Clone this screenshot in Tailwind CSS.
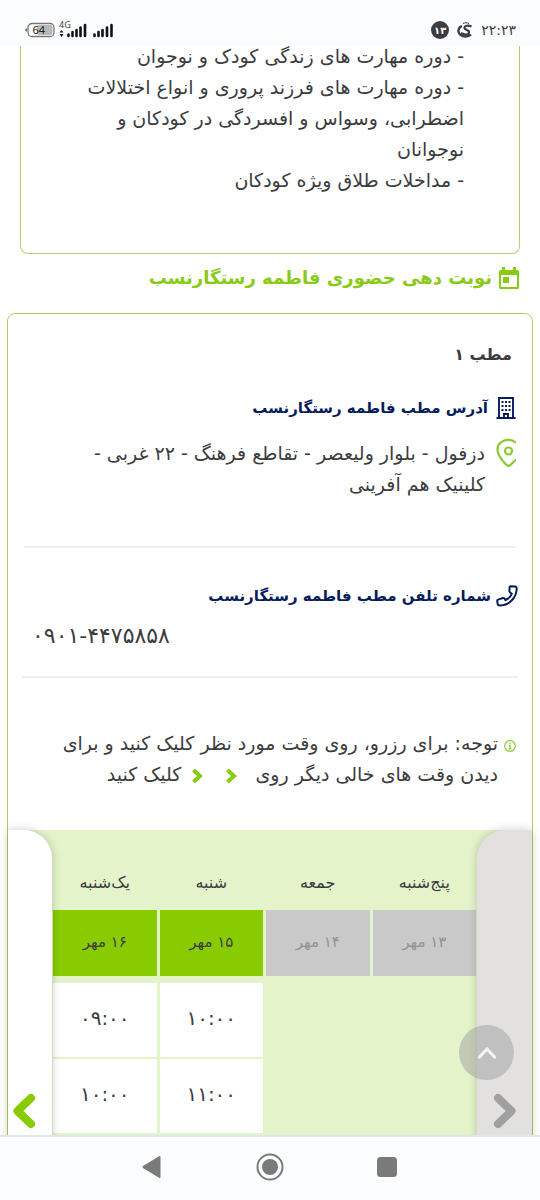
<!DOCTYPE html>
<html lang="fa" dir="rtl">
<head>
    <meta charset="UTF-8">
    <meta name="viewport" content="width=device-width, initial-scale=1.0">
    <title>نوبت دهی حضوری فاطمه رستگارنسب</title>
    <script src="https://cdn.jsdelivr.net/npm/@tailwindcss/browser@4"></script>
</head>
<body class="h-screen flex flex-col overflow-hidden bg-white text-[#3c3c3e] font-['DejaVu_Sans',sans-serif]">
    <!-- Status Bar -->
    <header class="relative z-20 h-[46px] shrink-0 bg-[#fbfcfe] flex items-end justify-between px-6 pb-1">
        <div class="flex items-center gap-2 h-6">
            <span class="text-sm">۲۲:۲۳</span>
            <svg class="w-4 h-4" viewBox="0 0 16 16" fill="none" stroke="#3c3c3e">
                <path d="M14.5 4.500C11.500 3 7 3.500 7.500 6S12.500 7.500 12 10.500 7 13 4 11" stroke-width="2.200"/>
                <path d="M5 4C1 5.500 0.500 10 3 12.500s8 3 11 0" stroke-width="2.400"/>
                <path d="M6 1.500c2-1 4-1 6 0" stroke-width="1"/>
            </svg>
            <span class="w-[18px] h-[18px] rounded-full bg-[#3c3c3e] text-white text-[10px] font-bold flex items-center justify-center">۱۳</span>
        </div>
        <div class="flex items-center gap-[2px] h-6" dir="ltr">
            <svg class="w-8 h-4" viewBox="0 0 32 16">
                <path d="M0.500 8L3 6v4z" fill="#777"/>
                <rect x="4" y="1.500" width="26" height="13" rx="4" fill="#fff" stroke="#777" stroke-width="1.300"/>
                <rect x="13" y="3" width="15.500" height="10" rx="2" fill="#b8b8b8"/>
                <text x="8.500" y="12" font-size="11" fill="#222" font-family="Noto Sans, sans-serif">64</text>
            </svg>
            <svg class="w-[30px] h-6" viewBox="0 0 30 24">
                <text x="1" y="10" font-size="9" fill="#444" font-family="Noto Sans, sans-serif">4G</text>
                <path d="M1.500 14.500L3.500 12l2 2.500zM1.500 16L3.500 19l2-3z" fill="#111"/>
                <path d="M10.500 18v-1.500M14.500 18v-4M18.500 18v-6M22.500 18V9.500M27 18V7" stroke="#111" stroke-width="2.600" stroke-linecap="round"/>
            </svg>
            <svg class="w-6 h-6 ml-[2px]" viewBox="0 0 24 24">
                <path d="M2.500 18v-1.500M6.500 18v-4M10.500 18v-6M15 18V9.500M19.500 18V7" stroke="#111" stroke-width="2.600" stroke-linecap="round"/>
            </svg>
        </div>
    </header>

    <main class="relative flex-1 min-h-0 overflow-hidden">
        <!-- Services -->
        <section class="mx-5 -mt-[5px] border border-t-0 border-[#b2d070] rounded-b-lg pr-[55px] pb-[57px] text-[19px] leading-[31px] whitespace-nowrap">
            <p>- دوره مهارت های زندگی کودک و نوجوان</p>
            <p>- دوره مهارت های فرزند پروری و انواع اختلالات<br>اضطرابی، وسواس و افسردگی در کودکان و<br>نوجوانان</p>
            <p>- مداخلات طلاق ویژه کودکان</p>
        </section>

        <h2 class="h-[59px] px-5 pb-3 flex items-center gap-[6px] text-lg font-bold text-[#88cb14]">
            <svg class="w-[22px] h-6" viewBox="0 0 22 24" fill="#88cb14">
                <path fill-rule="evenodd" d="M4 1h3v3h8V1h3v3h1.500Q21 4 21 5.500v16q0 1.500-1.500 1.500h-17Q1 23 1 21.500v-16Q1 4 2.500 4H4zM3 9v12h16V9z"/>
                <path d="M5 11h6v6H5z"/>
            </svg>
            نوبت دهی حضوری فاطمه رستگارنسب
        </h2>

        <!-- Office Card -->
        <section class="mx-[7px] border border-[#aed060] rounded-lg">
            <div class="px-4">
                <h3 class="pt-[25px] pr-1 text-base leading-8 font-bold">مطب ۱</h3>

                <h4 class="mt-[21px] flex items-center gap-2 text-[15px] leading-8 font-bold text-[#061d5c]">
                    <svg class="w-5 h-[22px]" viewBox="0 0 20 22" fill="none" stroke="#061d5c" stroke-width="1.900">
                        <path d="M3 21V1h14v20M0.500 21h19M8 21v-4h4v4"/>
                        <path d="M5.500 5h2M9 5h2M12.500 5h2M5.500 9h2M9 9h2M12.500 9h2M5.500 13h2M9 13h2M12.500 13h2" stroke-width="2"/>
                    </svg>
                    آدرس مطب فاطمه رستگارنسب
                </h4>
                <div class="mt-[14px] flex items-start gap-[11px] text-[19px] leading-[31px] whitespace-nowrap">
                    <svg class="w-5 h-[30px]" viewBox="0 0 20 30" fill="none" stroke="#8cc832" stroke-width="2.200">
                        <path d="M20 4.500C12-1 1.500 3 1.500 12c0 6 5 10.500 9 15q2 1.500 4 0L20 21.500"/>
                        <circle cx="12.500" cy="13" r="3.500"/>
                    </svg>
                    <p>دزفول - بلوار ولیعصر - تقاطع فرهنگ - ۲۲ غربی -<br>کلینیک هم آفرینی</p>
                </div>
                <hr class="mt-[46px] border-t-2 border-[#eeeeee]">
            </div>

            <div class="px-[14px]">
                <h4 class="mt-8 flex items-center gap-[5px] text-[15px] leading-8 font-bold text-[#061d5c]">
                    <svg class="w-[22px] h-[22px]" viewBox="0 0 22 22" fill="none" stroke="#061d5c" stroke-width="2" stroke-linejoin="round">
                        <path d="M14.500 1.200L19.500 1.500Q20.800 1.800 20.700 3.500C20.500 13 13 20.500 3.500 20.500Q2 20.500 1.700 19.300L1.200 15.500Q1.200 14.800 2 14.600L7 13Q8 12.800 8.600 13.600L9.500 15.200Q14.500 12.500 15.800 8.800L14.200 7.500Q13.300 6.800 13.400 5.800L13.600 2Q13.800 1.200 14.500 1.200z"/>
                    </svg>
                    شماره تلفن مطب فاطمه رستگارنسب
                </h4>
                <p class="pl-[10px] mt-2 text-[22px] leading-8 text-left"><a href="tel:09014475858">۰۹۰۱-۴۴۷۵۸۵۸</a></p>
                <hr class="mt-6 border-t-2 border-[#eeeeee]">
            </div>

            <div class="px-4 pt-[50px] pb-10 flex items-start gap-[6px] text-[19px] leading-[31px] whitespace-nowrap">
                <svg class="w-3 h-3 mt-3" viewBox="0 0 12 12" fill="none" stroke="#8cc832" stroke-width="1.200">
                    <circle cx="6" cy="6" r="5.300"/>
                    <path d="M6 2.500v1.500M5 5.500h1v3M4.500 8.800h3" stroke-width="1.300"/>
                </svg>
                <p>توجه: برای رزرو، روی وقت مورد نظر کلیک کنید و برای<br>دیدن وقت های خالی دیگر روی
                    <svg class="inline w-3 h-4 mx-3" viewBox="0 0 12 16" fill="none" stroke="#88cb14" stroke-width="4"><path d="M2.500 2L9 8l-6.500 6"/></svg>
                    <svg class="inline w-3 h-4 mx-1" viewBox="0 0 12 16" fill="none" stroke="#88cb14" stroke-width="4"><path d="M2.500 2L9 8l-6.500 6"/></svg>
                    کلیک کنید</p>
            </div>

            <!-- Schedule -->
            <div class="flex bg-[#e4f3ca]">
                <button type="button" aria-label="روزهای قبل" class="relative z-10 w-[55px] shrink-0 flex items-start justify-center pt-[263px] bg-[#e2e1e0] rounded-tl-[28px] shadow-[0_0_10px_rgba(0,0,0,0.2)]">
                    <svg class="w-6 h-9" viewBox="0 0 24 36" fill="none" stroke="#a0a0a0" stroke-width="8" stroke-linecap="round" stroke-linejoin="round"><path d="M5 5l13.500 13L5 31"/></svg>
                </button>
                <div class="flex-1 min-w-0 -mx-[2px]">
                    <table class="w-full table-fixed border-separate border-spacing-x-[3px] border-spacing-y-0 text-center">
                        <thead>
                            <tr class="h-20 text-base">
                                <th class="pt-[26px] font-normal">پنج‌شنبه</th>
                                <th class="pt-[26px] font-normal">جمعه</th>
                                <th class="pt-[26px] font-normal">شنبه</th>
                                <th class="pt-[26px] font-normal">یک‌شنبه</th>
                            </tr>
                            <tr class="h-[66px] text-[15px]">
                                <th class="pb-[2px] bg-[#c9c9c9] text-[#929292] font-normal">۱۳ مهر</th>
                                <th class="pb-[2px] bg-[#c9c9c9] text-[#929292] font-normal">۱۴ مهر</th>
                                <th class="pb-[2px] bg-[#88cb00] font-normal">۱۵ مهر</th>
                                <th class="pb-[2px] bg-[#88cb00] font-normal">۱۶ مهر</th>
                            </tr>
                        </thead>
                        <tbody class="text-xl">
                            <tr class="h-[7px]"><td colspan="4"></td></tr>
                            <tr>
                                <td></td>
                                <td></td>
                                <td class="pb-[2px]"><button type="button" class="block w-full h-[74px] pb-1 bg-white">۱۰:۰۰</button></td>
                                <td class="pb-[2px]"><button type="button" class="block w-full h-[74px] pb-1 bg-white">۰۹:۰۰</button></td>
                            </tr>
                            <tr>
                                <td></td>
                                <td></td>
                                <td class="pb-[2px]"><button type="button" class="block w-full h-[74px] pb-1 bg-white">۱۱:۰۰</button></td>
                                <td class="pb-[2px]"><button type="button" class="block w-full h-[74px] pb-1 bg-white">۱۰:۰۰</button></td>
                            </tr>
                            <tr>
                                <td></td>
                                <td></td>
                                <td class="h-[74px] bg-white"></td>
                                <td class="h-[74px] bg-white"></td>
                            </tr>
                        </tbody>
                    </table>
                </div>
                <button type="button" aria-label="روزهای بعد" class="relative z-10 w-11 shrink-0 flex items-start justify-end pl-1 pt-[263px] bg-white rounded-tr-[28px] shadow-[0_0_10px_rgba(0,0,0,0.2)]">
                    <svg class="w-6 h-9" viewBox="0 0 24 36" fill="none" stroke="#88cb00" stroke-width="8" stroke-linecap="round" stroke-linejoin="round"><path d="M19 5L5.500 18 19 31"/></svg>
                </button>
            </div>
        </section>

        <!-- Back to top -->
        <button type="button" aria-label="بازگشت به بالا" class="absolute z-10 bottom-[55px] right-[26px] w-[55px] h-[55px] rounded-full bg-[#a0a0a0]/50 flex items-center justify-center">
            <svg class="w-5 h-4" viewBox="0 0 20 16" fill="none" stroke="#f4f4f4" stroke-width="3.200" stroke-linecap="round"><path d="M2.500 12L10 4l7.500 8"/></svg>
        </button>
    </main>

    <!-- System Navigation -->
    <nav class="relative z-20 h-[65px] shrink-0 bg-[#fbfcfe] border-t-2 border-[#dfe8e8] flex items-center justify-center gap-[93px] pr-1 pb-1" dir="ltr">
        <button type="button" aria-label="Back"><svg class="w-6 h-6" viewBox="0 0 24 24" fill="#7a7a7a"><path d="M21.500 2v20q0 1.500-1.500 0.800L4 13q-1.200-1 0-2L20 1.200q1.500-.7 1.500.8z"/></svg></button>
        <button type="button" aria-label="Home"><svg class="w-7 h-7" viewBox="0 0 28 28" fill="none" stroke="#7a7a7a" stroke-width="2"><circle cx="14" cy="14" r="12.500"/><circle cx="14" cy="14" r="8" fill="#7a7a7a" stroke="none"/></svg></button>
        <button type="button" aria-label="Recents"><svg class="w-5 h-5" viewBox="0 0 20 20" fill="#7a7a7a"><rect width="20" height="20" rx="3.500"/></svg></button>
    </nav>
</body>
</html>
